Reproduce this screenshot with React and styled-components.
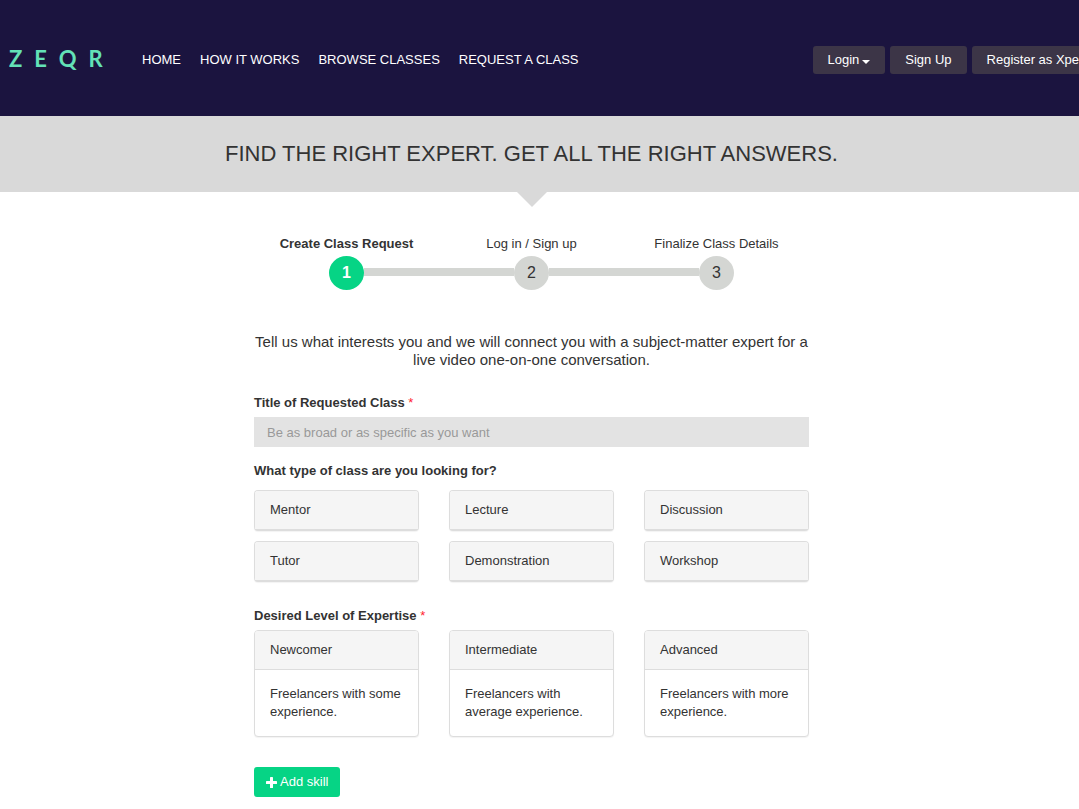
import React, {useState} from 'react'
import styled, {createGlobalStyle} from 'styled-components'

const GlobalStyle=createGlobalStyle`
*{
    box-sizing:border-box;
}
body{
    margin:0;
    overflow-x:hidden;
    background-color:#ffffff;
    color:#333333;
    font-family:"Liberation Sans",Arial,sans-serif;
    font-size:13px;
    line-height:18px;
}
button,input{
    font-family:inherit;
}
`

const Header=styled.header`
    background-color:#1b143f;
    overflow:hidden;
`
const HeaderInner=styled.div`
    display:flex;
    align-items:center;
    min-width:1102px;
    height:116px;
    padding:0 0 0 9px;
`
const Logo=styled.a`
    color:#63e2b7;
    font-family:Lato,sans-serif;
    font-size:22px;
    font-weight:bold;
    line-height:28px;
    letter-spacing:12px;
    text-decoration:none;
    width:133px;
    padding-top:2px;
    white-space:nowrap;
`
const Nav=styled.nav`
    display:flex;
    gap:19px;
    padding-top:4px;
`
const NavLink=styled.a`
    color:#ffffff;
    font-size:13px;
    line-height:20px;
    text-decoration:none;
    white-space:nowrap;
`
const Actions=styled.div`
    display:flex;
    gap:5px;
    margin-left:auto;
    padding-top:4px;
`
const HeaderButton=styled.button`
    display:flex;
    align-items:center;
    gap:3px;
    height:28px;
    padding:0 15px;
    border:none;
    border-radius:3px;
    background-color:#3c3547;
    color:#ffffff;
    font-size:13px;
    line-height:20px;
    white-space:nowrap;
    cursor:pointer;
`
const Caret=styled.span`
    margin-top:3px;
    border:4px solid transparent;
    border-top-color:#ffffff;
    border-bottom:none;
`

const Banner=styled.section`
    display:flex;
    flex-direction:column;
    align-items:center;
    height:76px;
    padding:23px 16px 0 0;
    background-color:#d9d9d9;
`
const BannerTitle=styled.h1`
    margin:0 0 24px;
    font-size:22px;
    font-weight:normal;
    line-height:29px;
    text-transform:uppercase;
`
const Arrow=styled.div`
    border:15px solid transparent;
    border-top-color:#d9d9d9;
    border-bottom:none;
`

const Content=styled.main`
    padding:43px 16px 12px 0;
`
const Steps=styled.ol`
    display:flex;
    justify-content:center;
    margin:0;
    padding:0;
    list-style:none;
`
const Step=styled.li`
    width:185px;
    text-align:center;
    font-weight:${props=>props.$active?'bold':'normal'};
`
const StepTrack=styled.div`
    display:grid;
    grid-template-columns:1fr 35px 1fr;
    align-items:center;
    margin-top:3px;
`
const StepLine=styled.span`
    height:8px;
    margin-bottom:2px;
    background-color:${props=>props.$hidden?'transparent':'#d4d6d3'};
`
const StepNumber=styled.span`
    height:34px;
    border-radius:50%;
    background-color:${props=>props.$active?'#06d485':'#d4d6d3'};
    color:${props=>props.$active?'#ffffff':'#333333'};
    font-size:16px;
    line-height:33px;
`
const Form=styled.form`
    max-width:555px;
    margin:0 auto;
`
const Intro=styled.p`
    margin:43px 0 25px;
    font-size:15px;
    text-align:center;
`
const Label=styled.label`
    display:block;
    margin-bottom:5px;
    font-weight:bold;
`
const Required=styled.span`
    color:#ff1f2f;
    font-weight:normal;
`
const TextInput=styled.input`
    display:block;
    width:100%;
    height:30px;
    padding:0 13px;
    border:none;
    border-radius:0;
    background-color:#e3e3e3;
    color:#333333;
    font-size:13px;
    &::placeholder{
        color:#999999;
    }
`
const Group=styled.fieldset`
    margin:${props=>props.$top}px 0 0;
    padding:0;
    border:none;
`
const Legend=styled.legend`
    margin-bottom:${props=>props.$gap}px;
    padding:0;
    font-weight:bold;
`
const Options=styled.div`
    display:grid;
    grid-template-columns:repeat(3,1fr);
    gap:10px 30px;
`
const Card=styled.button`
    display:flex;
    flex-direction:column;
    padding:0;
    border:1px solid #dddddd;
    border-bottom-width:${props=>props.$thick?'2px':'1px'};
    border-radius:4px;
    background-color:#ffffff;
    box-shadow:0 1px 1px rgba(0,0,0,0.05);
    color:#333333;
    font-size:13px;
    line-height:18px;
    text-align:left;
    cursor:pointer;
    &[aria-pressed=true]{
        border-color:#06d485;
    }
`
const CardHeading=styled.span`
    width:100%;
    padding:10px 15px;
    border-radius:3px 3px 0 0;
    background-color:#f5f5f5;
`
const CardBody=styled.span`
    width:100%;
    padding:15px;
    border-top:1px solid #dddddd;
`
const AddButton=styled.button`
    display:flex;
    align-items:center;
    gap:3px;
    height:30px;
    margin-top:30px;
    padding:0 12px;
    border:none;
    border-radius:3px;
    background-color:#06d485;
    color:#ffffff;
    font-size:13px;
    line-height:18px;
    cursor:pointer;
`

const links=['HOME','HOW IT WORKS','BROWSE CLASSES','REQUEST A CLASS']
const steps=['Create Class Request','Log in / Sign up','Finalize Class Details']
const types=['Mentor','Lecture','Discussion','Tutor','Demonstration','Workshop']
const levels=[
    {name:'Newcomer',text:'Freelancers with some experience.'},
    {name:'Intermediate',text:'Freelancers with average experience.'},
    {name:'Advanced',text:'Freelancers with more experience.'},
]

const PlusIcon=()=>{
    return <svg width="11" height="11" viewBox="0 0 11 11" fill="#ffffff" aria-hidden="true">
        <rect x="4" y="0" width="3" height="11" rx="0.6"/>
        <rect x="0" y="4" width="11" height="3" rx="0.6"/>
    </svg>
}

const TopBar=()=>{
    return <Header>
        <HeaderInner>
            <Logo href="#">ZEQR</Logo>
            <Nav>
                {links.map(link=><NavLink key={link} href="#">{link}</NavLink>)}
            </Nav>
            <Actions>
                <HeaderButton type="button">Login <Caret/></HeaderButton>
                <HeaderButton type="button">Sign Up</HeaderButton>
                <HeaderButton type="button">Register as Xpert</HeaderButton>
            </Actions>
        </HeaderInner>
    </Header>
}

const Progress=({current})=>{
    return <Steps>
        {steps.map((step,i)=>(
            <Step key={step} $active={i===current}>
                {step}
                <StepTrack>
                    <StepLine $hidden={i===0}/>
                    <StepNumber $active={i===current}>{i+1}</StepNumber>
                    <StepLine $hidden={i===steps.length-1}/>
                </StepTrack>
            </Step>
        ))}
    </Steps>
}

export default function App(){
    const [type,setType]=useState('')
    const [level,setLevel]=useState('')

    return <>
        <GlobalStyle/>
        <TopBar/>
        <Banner>
            <BannerTitle>Find the right expert. Get all the right answers.</BannerTitle>
            <Arrow/>
        </Banner>
        <Content>
            <Progress current={0}/>
            <Form>
                <Intro>Tell us what interests you and we will connect you with a subject-matter expert for a live video one-on-one conversation.</Intro>
                <Label htmlFor="title">Title of Requested Class <Required>*</Required></Label>
                <TextInput id="title" type="text" placeholder="Be as broad or as specific as you want"/>
                <Group $top={15}>
                    <Legend $gap={10}>What type of class are you looking for?</Legend>
                    <Options>
                        {types.map(name=>(
                            <Card key={name} type="button" $thick aria-pressed={type===name} onClick={()=>setType(name)}>
                                <CardHeading>{name}</CardHeading>
                            </Card>
                        ))}
                    </Options>
                </Group>
                <Group $top={25}>
                    <Legend $gap={5}>Desired Level of Expertise <Required>*</Required></Legend>
                    <Options>
                        {levels.map(({name,text})=>(
                            <Card key={name} type="button" aria-pressed={level===name} onClick={()=>setLevel(name)}>
                                <CardHeading>{name}</CardHeading>
                                <CardBody>{text}</CardBody>
                            </Card>
                        ))}
                    </Options>
                </Group>
                <AddButton type="button"><PlusIcon/> Add skill</AddButton>
            </Form>
        </Content>
    </>
}
